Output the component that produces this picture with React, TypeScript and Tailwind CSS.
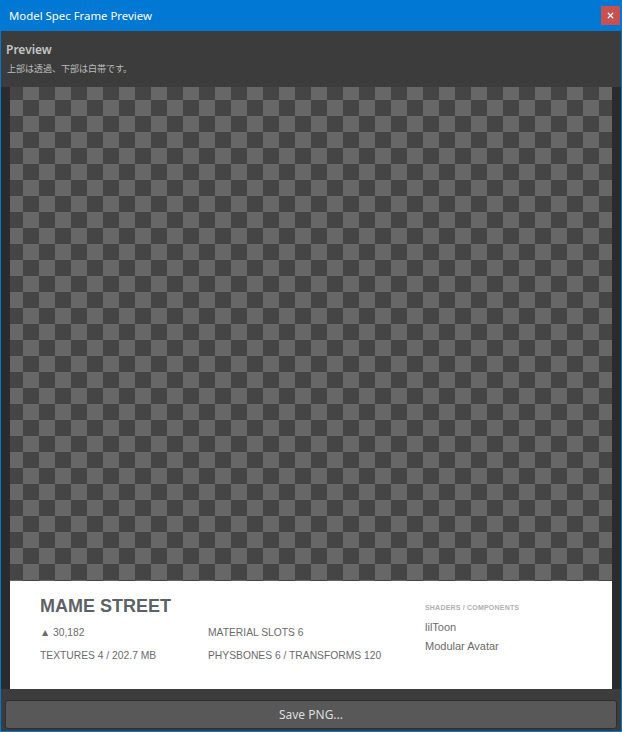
import { X } from "lucide-react";

const stats = [
  "▲ 30,182",
  "MATERIAL SLOTS 6",
  "TEXTURES 4 / 202.7 MB",
  "PHYSBONES 6 / TRANSFORMS 120",
];

const components = ["lilToon", "Modular Avatar"];

function SpecBand() {
  return (
    <div className="flex h-[108px] bg-white pl-[30px] pt-[15px] font-['Liberation_Sans',Arial,sans-serif]">
      <div className="w-[385px]">
        <div className="text-[18px] leading-[20px] font-bold text-[#5d6267]">
          MAME STREET
        </div>
        <div className="mt-[10px] grid grid-cols-[168px_1fr] gap-y-[8.5px] text-[10.3px] leading-[14px] text-[#6b6b6b]">
          {stats.map((s) => (
            <div key={s}>{s}</div>
          ))}
        </div>
      </div>
      <div className="flex flex-col pt-[7px]">
        <div className="text-[7px] leading-[10px] font-bold tracking-[0.2px] text-[#b0b0b0]">
          SHADERS / COMPONENTS
        </div>
        <div className="mt-[7px] flex flex-col gap-[5px] text-[11px] leading-[14px] text-[#6b6b6b]">
          {components.map((c) => (
            <div key={c}>{c}</div>
          ))}
        </div>
      </div>
    </div>
  );
}

export default function App() {
  return (
    <div className="flex h-[732px] w-[622px] flex-col bg-[#0078d4] px-px pb-px font-['Noto_Sans',sans-serif]">
      <div className="flex h-[31px] shrink-0 items-center justify-between pl-[8px] pr-px">
        <span className="text-[11.4px] text-white">Model Spec Frame Preview</span>
        <button
          type="button"
          className="flex h-[19px] w-[19px] items-center justify-center bg-[#c75050] text-white"
          aria-label="Close"
        >
          <X size={9} strokeWidth={3.5} />
        </button>
      </div>

      <div className="flex flex-1 flex-col bg-[#3c3c3c]">
        <div className="px-[4px] pt-[11px]">
          <div className="pl-px text-[12px] leading-[15px] font-semibold text-[#c4c4c4]">
            Preview
          </div>
          <div className="mt-[6px] pl-[2px] font-['Noto_Sans_CJK_JP',sans-serif] text-[9px] leading-[12px] text-[#bdbdbd]">
            上部は透過、下部は白帯です。
          </div>
        </div>

        <div className="mt-[12px] flex h-[602px] justify-center bg-[#2b2b2b]">
          <div className="flex w-[602px] flex-col">
            <div className="flex-1 bg-[image:repeating-conic-gradient(#676767_0%_25%,#454545_0%_50%)] bg-[length:32px_32px] bg-[position:-3px_-3px]" />
            <SpecBand />
          </div>
        </div>

        <button
          type="button"
          className="mx-[4px] mt-[11px] h-[29px] rounded-[3px] border border-[#2e2e2e] bg-[#585858] text-[12px] text-[#dedede]"
        >
          Save PNG...
        </button>
      </div>
    </div>
  );
}
